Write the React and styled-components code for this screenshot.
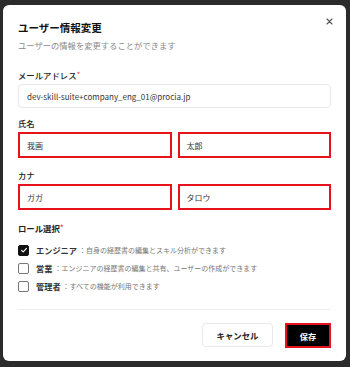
import React from 'react';
import styled, { createGlobalStyle } from 'styled-components';

const GlobalStyle = createGlobalStyle`
  html, body {
    margin: 0;
    padding: 0;
    background: #2b2b2b;
    font-family: "Noto Sans CJK JP", "Noto Sans", sans-serif;
  }
  * { box-sizing: border-box; }
`;

const roles = [
  { name: 'エンジニア', desc: '自身の経歴書の編集とスキル分析ができます', checked: true },
  { name: '営業', desc: 'エンジニアの経歴書の編集と共有、ユーザーの作成ができます', checked: false },
  { name: '管理者', desc: 'すべての機能が利用できます', checked: false },
];

const App = () => {
  return (
    <>
      <GlobalStyle />
      <Wrapper>
        <Dialog>
          <CloseButton aria-label="close">
            <svg width="7" height="7" viewBox="0 0 7 7">
              <path d="M1 1L6 6M6 1L1 6" stroke="#555" strokeWidth="1.1" strokeLinecap="round" />
            </svg>
          </CloseButton>
          <Title>ユーザー情報変更</Title>
          <Subtitle>ユーザーの情報を変更することができます</Subtitle>

          <Field $top={18}>
            <Label>メールアドレス<Req>*</Req></Label>
            <Input defaultValue="dev-skill-suite+company_eng_01@procia.jp" />
          </Field>

          <Field $top={9}>
            <Label>氏名</Label>
            <Pair>
              <Input $error defaultValue="我画" />
              <Input $error defaultValue="太郎" />
            </Pair>
          </Field>

          <Field $top={11}>
            <Label>カナ</Label>
            <Pair>
              <Input $error defaultValue="ガガ" />
              <Input $error defaultValue="タロウ" />
            </Pair>
          </Field>

          <Field $top={12}>
            <Label $bold>ロール選択<Req>*</Req></Label>
            <RoleList>
              {roles.map((r) => (
                <RoleRow key={r.name}>
                  <Check $checked={r.checked}>
                    {r.checked && (
                      <svg width="8" height="8" viewBox="0 0 8 8">
                        <path d="M1.6 4.3L3.2 5.8L6.5 2.3" stroke="#fff" strokeWidth="1.1" fill="none" strokeLinecap="round" strokeLinejoin="round" />
                      </svg>
                    )}
                  </Check>
                  <RoleName>{r.name}</RoleName>
                  <RoleDesc>：{r.desc}</RoleDesc>
                </RoleRow>
              ))}
            </RoleList>
          </Field>

          <Divider />

          <Footer>
            <CancelButton>キャンセル</CancelButton>
            <SaveButton>保存</SaveButton>
          </Footer>
        </Dialog>
      </Wrapper>
    </>
  );
};

const Wrapper = styled.div`
  width: 350px;
  height: 367px;
  padding: 5px 4px 6px 3px;
`;

const Dialog = styled.div`
  position: relative;
  height: 356px;
  background: #fff;
  border-radius: 6px;
  padding: 16px 15px 0 15px;
  display: flex;
  flex-direction: column;
`;

const CloseButton = styled.button`
  position: absolute;
  top: 11px;
  right: 12px;
  width: 10px;
  height: 10px;
  padding: 0;
  border: none;
  background: transparent;
  display: flex;
  align-items: center;
  justify-content: center;
`;

const Title = styled.h2`
  margin: 0;
  font-size: 10.5px;
  line-height: 14px;
  font-weight: 700;
  color: #111;
`;

const Subtitle = styled.p`
  margin: 4px 0 0;
  font-size: 8.3px;
  line-height: 12px;
  color: #8a8a8a;
`;

const Field = styled.div`
  margin-top: ${(p) => p.$top}px;
  display: flex;
  flex-direction: column;
  gap: 3px;
`;

const Label = styled.label`
  font-size: 8.4px;
  line-height: 12px;
  font-weight: ${(p) => (p.$bold ? 700 : 500)};
  color: #222;
`;

const Req = styled.span`
  color: #e5484d;
  font-size: 7px;
  vertical-align: top;
  line-height: 10px;
`;

const Pair = styled.div`
  display: grid;
  grid-template-columns: 1fr 1fr;
  gap: 6px;
`;

const Input = styled.input`
  width: 100%;
  height: ${(p) => (p.$error ? '26px' : '24px')};
  padding: 0 ${(p) => (p.$error ? '7px' : '8px')};
  border: ${(p) => (p.$error ? '2px solid #e8121c' : '1px solid #e8e8e8')};
  border-radius: ${(p) => (p.$error ? '0' : '4px')};
  font-family: inherit;
  font-size: 8px;
  color: #333;
  background: #fff;
  outline: none;
`;

const RoleList = styled.div`
  margin-top: 7px;
  display: flex;
  flex-direction: column;
  gap: 6px;
`;

const RoleRow = styled.div`
  display: flex;
  align-items: center;
  height: 12px;
  white-space: nowrap;
`;

const Check = styled.span`
  width: 11px;
  height: 11px;
  border-radius: 2px;
  margin-right: 7px;
  display: flex;
  align-items: center;
  justify-content: center;
  background: ${(p) => (p.$checked ? '#111' : '#fff')};
  border: 1px solid ${(p) => (p.$checked ? '#111' : '#777')};
`;

const RoleName = styled.span`
  font-size: 8.2px;
  font-weight: 700;
  color: #333;
  margin-right: 2px;
`;

const RoleDesc = styled.span`
  font-size: 7px;
  color: #777;
`;

const Divider = styled.div`
  margin-top: 17px;
  height: 1px;
  background: #eeeeee;
`;

const Footer = styled.div`
  margin-top: 13px;
  display: flex;
  justify-content: flex-end;
  gap: 12px;
`;

const CancelButton = styled.button`
  width: 71px;
  height: 24px;
  border: 1px solid #e8e8e8;
  border-radius: 4px;
  background: #fff;
  font-family: inherit;
  font-size: 8.4px;
  font-weight: 700;
  color: #222;
`;

const SaveButton = styled.button`
  width: 46px;
  height: 25px;
  border: 2px solid #e8121c;
  background: #000;
  color: #fff;
  font-family: inherit;
  font-size: 8.2px;
  font-weight: 700;
`;

export default App;
